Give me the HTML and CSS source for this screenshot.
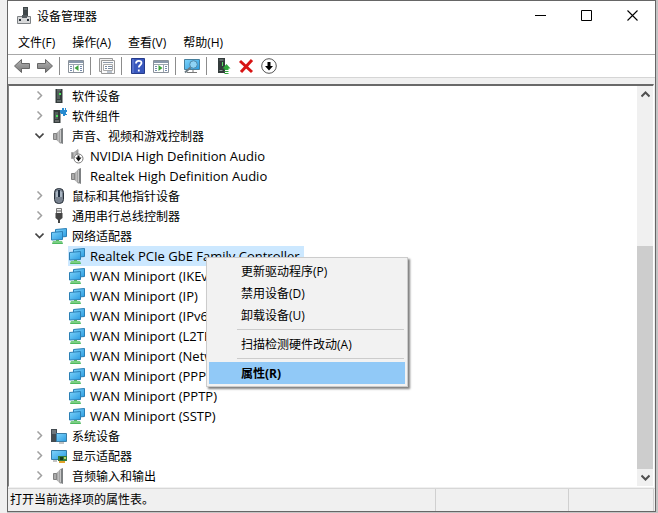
FILE: index.html
```html
<!DOCTYPE html>
<html lang="zh-CN">
  <head>
    <meta charset="utf-8" />
    <meta name="viewport" content="width=device-width, initial-scale=1" />
    <title>设备管理器</title>
    <link rel="stylesheet" href="styles.css">
  </head>
  <body>
    <!-- Shared icons -->
    <svg class="icon-defs" aria-hidden="true">
      <defs>
        <linearGradient id="screen" x1="0" y1="0" x2="1" y2="1">
          <stop offset="0" stop-color="#7fd4fb" />
          <stop offset="1" stop-color="#2a9be0" />
        </linearGradient>
        <linearGradient id="metal" x1="0" y1="0" x2="1" y2="0">
          <stop offset="0" stop-color="#777" />
          <stop offset="0.5" stop-color="#c4c4c4" />
          <stop offset="1" stop-color="#888" />
        </linearGradient>
        <linearGradient id="arrow" x1="0" y1="0" x2="0" y2="1">
          <stop offset="0" stop-color="#b5b5b5" />
          <stop offset="1" stop-color="#777" />
        </linearGradient>
      </defs>
      <symbol id="i-right" viewBox="0 0 9 9"><path d="M2.5 0.5l4 4-4 4" fill="none" stroke="#a0a0a0" stroke-width="1.5" /></symbol>
      <symbol id="i-down" viewBox="0 0 9 9"><path d="M0.5 2.5l4 4 4-4" fill="none" stroke="#444" stroke-width="1.6" /></symbol>
      <symbol id="i-network" viewBox="0 0 16 16">
        <path d="M4.500 1.500l11-1v8l-11 1z" fill="url(#screen)" stroke="#2b7fb5" />
        <path d="M.5 4.500l11-1v8l-11 .5z" fill="url(#screen)" stroke="#2b7fb5" />
        <path d="M5 12h3v1h3l1 3H1l1-3h3z" fill="#4fb860" />
        <path d="M2 14h9" stroke="#a6e5a4" />
      </symbol>
      <symbol id="i-speaker" viewBox="0 0 16 16">
        <path d="M2.500 5.500h3v6h-3z" fill="#aaa" stroke="#808080" />
        <path d="M5 5.500l4.500-4.500v15L5 11.500z" fill="url(#metal)" />
        <path d="M9.500 1l2.500-1v16l-2.500-1z" fill="#7d8082" />
        <path d="M9.500 2v12" stroke="#c9c9c9" />
      </symbol>
      <symbol id="i-speaker-off" viewBox="0 0 16 16">
        <path d="M2.500 4.500h2v6h-2zM5 4.500l4-3v11l-4-3" fill="url(#metal)" stroke="#aaa" />
        <circle cx="9.500" cy="10.500" r="4.500" fill="#fff" stroke="#777" />
        <path d="M8.500 7.500h2v2h2l-3 4-3-4h2z" fill="#111" />
      </symbol>
      <symbol id="i-device" viewBox="0 0 16 16">
        <path d="M4.500 1h7v14h-7z" fill="#333b3b" />
        <path d="M6 3h3v8H6z" fill="#53605c" />
        <path d="M6 2h4M6 13h4" stroke="#8b9794" />
        <path d="M8 5h2v2H8z" fill="#4be35c" />
      </symbol>
      <symbol id="i-component" viewBox="0 0 16 16">
        <path d="M2.500 2h7v13h-7z" fill="#333b3b" />
        <path d="M4 4h3v7H4z" fill="#53605c" /><path d="M4 13h4" stroke="#999" />
        <path d="M5 7h2v2H5z" fill="#4be35c" />
        <path d="M9 2h2V0h2v2h1V0h1v2h1v2h-1v2h1v1h-2v1h-2V6h-2V5H9z" fill="#288bd0" />
      </symbol>
      <symbol id="i-mouse" viewBox="0 0 16 16">
        <rect x="3.500" y=".5" width="9" height="15" rx="4" fill="#78828f" stroke="#29313a" />
        <path d="M5 4q3-3 6 0v5H5z" fill="#a9b5c2" />
        <path d="M8 2v7" stroke="#202e40" stroke-width="2" />
      </symbol>
      <symbol id="i-usb" viewBox="0 0 16 16">
        <path d="M5.500.5h5v5h-5z" fill="#eee" stroke="#777" />
        <path d="M7 2v2M9 2v2" stroke="#555" />
        <path d="M4.500 5h7v5L9 12v3H7v-3l-2.500-2z" fill="#444" />
      </symbol>
      <symbol id="i-system" viewBox="0 0 16 16">
        <path d="M0 1h6v13H0z" fill="#444c51" /><path d="M1 3h4M1 5h4" stroke="#99a4ab" />
        <path d="M5.500 5.500h10v8h-10z" fill="url(#screen)" stroke="#3b7da5" />
        <path d="M8 15h5" stroke="#888" />
      </symbol>
      <symbol id="i-display" viewBox="0 0 16 16">
        <path d="M.5 2.500h15v9H.5z" fill="url(#screen)" stroke="#347da8" />
        <path d="M7 8h9v5H7z" fill="#327b3d" /><path d="M9 9h3v3H9z" fill="#193a20" />
        <path d="M13 9h2v2h-2z" fill="#b8d36b" /><path d="M8 14h6" stroke="#e3a42b" stroke-width="2" />
        <path d="M2 13h4" stroke="#888" />
      </symbol>
      <symbol id="i-manager" viewBox="0 0 16 18">
        <path d="M7 0h5v11H7z" fill="#3f4648" /><path d="M8 2h3" stroke="#8b9497" />
        <path d="M1.500 9.500h13v7h-13z" fill="#d8d9da" stroke="#7e8285" />
        <path d="M6 8h5v3H6z" fill="#555c60" />
        <path d="M3 12h2v2H3zM11 12h2v2h-2z" fill="#29323a" />
      </symbol>
    </svg>

    <div class="window">
      <header class="titlebar">
        <svg class="app-icon"><use href="#i-manager" /></svg>
        <h1>设备管理器</h1>
        <button class="win-btn" aria-label="最小化"><svg width="11" height="11"><path d="M0 5.500h11" stroke="#000" /></svg></button>
        <button class="win-btn" aria-label="最大化"><svg width="11" height="11"><path d="M.5.5h10v10H.5z" fill="none" stroke="#000" /></svg></button>
        <button class="win-btn" aria-label="关闭"><svg width="11" height="11"><path d="M.5.5l10 10M10.500.5l-10 10" stroke="#000" stroke-width="1.100" /></svg></button>
      </header>

      <nav class="menubar">
        <button>文件(F)</button>
        <button>操作(A)</button>
        <button>查看(V)</button>
        <button>帮助(H)</button>
      </nav>

      <div class="toolbar">
        <button aria-label="后退"><svg viewBox="0 0 16 16"><path d="M.5 8L7.500 1.500v4h8v5h-8v4z" fill="url(#arrow)" stroke="#666" /></svg></button>
        <button aria-label="前进"><svg viewBox="0 0 16 16"><path d="M15.500 8L8.500 1.500v4h-8v5h8v4z" fill="url(#arrow)" stroke="#666" /></svg></button>
        <span class="sep"></span>
        <button aria-label="显示控制台树">
          <svg viewBox="0 0 16 16">
            <path d="M.5 2.500h15v12H.5z" fill="#fff" stroke="#8a929b" /><path d="M1 4h14" stroke="#8998ab" stroke-width="2" />
            <path d="M1 6.500h14M5.500 7v7" stroke="#9ba5b0" /><path d="M2 8.500h2M2 10.500h2M2 12.500h2M12 8.500h2M12 10.500h2M12 12.500h2" stroke="#758bad" />
            <path d="M10.500 7v6l-4-3z" fill="#3da33b" />
          </svg>
        </button>
        <span class="sep"></span>
        <button aria-label="属性">
          <svg viewBox="0 0 16 16">
            <path d="M.5.5h13v13H.5z" fill="#f1f1f1" stroke="#999" /><path d="M2.500 2.500h13v13h-13z" fill="#fafafa" stroke="#999" />
            <path d="M4 4.500h10" stroke="#8e9aaa" /><path d="M4.500 6.500h9v6h-9z" fill="#fff" stroke="#aaa" />
            <path d="M6 8.500h2M9 8.500h4M6 10.500h2M9 10.500h4M8 14h5" stroke="#788aa0" />
          </svg>
        </button>
        <span class="sep"></span>
        <button aria-label="帮助">
          <svg viewBox="0 0 16 16">
            <path d="M1.500.5h13v15h-13z" fill="#3857bd" stroke="#253b8a" /><path d="M3 1v14" stroke="#7089da" />
            <path d="M6 5.500c0-3.500 5.500-3.500 5.500-.5 0 2-2.700 2-2.700 4.500M8.800 11.500v2" fill="none" stroke="#fff" stroke-width="1.800" />
          </svg>
        </button>
        <button aria-label="显示操作窗格">
          <svg viewBox="0 0 16 16">
            <path d="M.5 2.500h15v12H.5z" fill="#fff" stroke="#8a929b" /><path d="M1 4h14" stroke="#8998ab" stroke-width="2" />
            <path d="M1 6.500h14M10.500 7v7" stroke="#9ba5b0" /><path d="M12 8.500h2M12 10.500h2M12 12.500h2M2 8.500h2M2 10.500h2M2 12.500h2" stroke="#758bad" />
            <path d="M5.500 7v6l4-3z" fill="#3da33b" />
          </svg>
        </button>
        <span class="sep"></span>
        <button aria-label="扫描检测硬件改动">
          <svg viewBox="0 0 16 16">
            <path d="M.5 1.500h15v10H.5z" fill="url(#screen)" stroke="#477f9c" /><path d="M3 14.500h10M9 12v2" stroke="#777" />
            <circle cx="9.500" cy="6.500" r="3.800" fill="#8fd3f5" stroke="#4f88a8" /><path d="M6.500 9.500L1 14.500" stroke="#6c7a82" stroke-width="2" />
          </svg>
        </button>
        <span class="sep"></span>
        <button aria-label="更新驱动程序">
          <svg viewBox="0 0 16 16">
            <path d="M3 0h7v15H3z" fill="#333b3b" /><path d="M4.500 2h4M4.500 12.500h3" stroke="#909c99" /><path d="M7 4h1v4H7z" fill="#5edb68" />
            <path d="M11.500 6l4 4.500h-2V12h-4v-1.500h-2zM9.500 13h4v1h-4zM9.500 15h4v1h-4z" fill="#31a83c" />
          </svg>
        </button>
        <button aria-label="卸载设备"><svg viewBox="0 0 16 16"><path d="M2 3l12 11M14 2L3 14" fill="none" stroke="#d71414" stroke-width="3" /></svg></button>
        <button aria-label="禁用设备">
          <svg viewBox="0 0 16 16">
            <circle cx="8" cy="8" r="7.300" fill="#fff" stroke="#555" /><path d="M6.500 4h3v4h2.500l-4 4.500L4 8h2.500z" fill="#000" />
          </svg>
        </button>
      </div>

      <main class="content">
        <div class="tree-pane">
          <ul class="tree">
            <li><button class="node"><svg class="chev"><use href="#i-right" /></svg><svg class="icon"><use href="#i-device" /></svg><span>软件设备</span></button></li>
            <li><button class="node"><svg class="chev"><use href="#i-right" /></svg><svg class="icon"><use href="#i-component" /></svg><span>软件组件</span></button></li>
            <li>
              <button class="node"><svg class="chev"><use href="#i-down" /></svg><svg class="icon"><use href="#i-speaker" /></svg><span>声音、视频和游戏控制器</span></button>
              <ul class="children">
                <li><button class="node"><svg class="icon"><use href="#i-speaker-off" /></svg><span>NVIDIA High Definition Audio</span></button></li>
                <li><button class="node"><svg class="icon"><use href="#i-speaker" /></svg><span>Realtek High Definition Audio</span></button></li>
              </ul>
            </li>
            <li><button class="node"><svg class="chev"><use href="#i-right" /></svg><svg class="icon"><use href="#i-mouse" /></svg><span>鼠标和其他指针设备</span></button></li>
            <li><button class="node"><svg class="chev"><use href="#i-right" /></svg><svg class="icon"><use href="#i-usb" /></svg><span>通用串行总线控制器</span></button></li>
            <li>
              <button class="node"><svg class="chev"><use href="#i-down" /></svg><svg class="icon"><use href="#i-network" /></svg><span>网络适配器</span></button>
              <ul class="children">
                <li><button class="node selected"><svg class="icon"><use href="#i-network" /></svg><span>Realtek PCIe GbE Family Controller</span></button></li>
                <li><button class="node"><svg class="icon"><use href="#i-network" /></svg><span>WAN Miniport (IKEv2)</span></button></li>
                <li><button class="node"><svg class="icon"><use href="#i-network" /></svg><span>WAN Miniport (IP)</span></button></li>
                <li><button class="node"><svg class="icon"><use href="#i-network" /></svg><span>WAN Miniport (IPv6)</span></button></li>
                <li><button class="node"><svg class="icon"><use href="#i-network" /></svg><span>WAN Miniport (L2TP)</span></button></li>
                <li><button class="node"><svg class="icon"><use href="#i-network" /></svg><span>WAN Miniport (Network)</span></button></li>
                <li><button class="node"><svg class="icon"><use href="#i-network" /></svg><span>WAN Miniport (PPPOE)</span></button></li>
                <li><button class="node"><svg class="icon"><use href="#i-network" /></svg><span>WAN Miniport (PPTP)</span></button></li>
                <li><button class="node"><svg class="icon"><use href="#i-network" /></svg><span>WAN Miniport (SSTP)</span></button></li>
              </ul>
            </li>
            <li><button class="node"><svg class="chev"><use href="#i-right" /></svg><svg class="icon"><use href="#i-system" /></svg><span>系统设备</span></button></li>
            <li><button class="node"><svg class="chev"><use href="#i-right" /></svg><svg class="icon"><use href="#i-display" /></svg><span>显示适配器</span></button></li>
            <li><button class="node"><svg class="chev"><use href="#i-right" /></svg><svg class="icon"><use href="#i-speaker" /></svg><span>音频输入和输出</span></button></li>
          </ul>

          <div class="scrollbar">
            <button aria-label="向上滚动"><svg width="9" height="7"><path d="M.5 5.500l4-4 4 4" fill="none" stroke="#505050" stroke-width="2" /></svg></button>
            <div class="track"><div class="thumb"></div></div>
            <button aria-label="向下滚动"><svg width="9" height="7"><path d="M.5 1.500l4 4 4-4" fill="none" stroke="#505050" stroke-width="2" /></svg></button>
          </div>

          <div class="context-menu">
            <button>更新驱动程序(P)</button>
            <button>禁用设备(D)</button>
            <button>卸载设备(U)</button>
            <hr />
            <button>扫描检测硬件改动(A)</button>
            <hr />
            <button class="active">属性(R)</button>
          </div>
        </div>
      </main>

      <footer class="statusbar">
        <span class="message">打开当前选择项的属性表。</span>
        <span class="cell cell-wide"></span>
        <span class="cell"></span>
      </footer>
    </div>
  </body>
</html>
```
FILE: styles.css
```css
*{
  box-sizing: border-box;
}

body{
  margin: 0;
  min-height: 100vh;
  padding: 0 2px 2px 7px;
  display: flex;
  background: linear-gradient(to right, #f0f0f0 7px, #c4c4c4 7px);
  font-family: "Open Sans", "Noto Sans CJK SC", sans-serif;
  font-size: 12px;
  color: #000;
}

button{
  margin: 0;
  padding: 0;
  border: 0;
  background: none;
  font: inherit;
  color: inherit;
}

svg{
  display: block;
  flex: none;
}

.icon-defs{
  position: absolute;
  width: 0;
  height: 0;
}

.window{
  flex: 1;
  min-width: 0;
  display: flex;
  flex-direction: column;
  border: 1px solid #666;
  background-color: #fff;
}

/* title and menus */
.titlebar{
  display: flex;
  align-items: center;
  height: 29px;
  padding-left: 8px;
}

.titlebar h1{
  flex: 1;
  margin: 0;
  padding-left: 5px;
  font-size: 12px;
  font-weight: normal;
}

.app-icon{
  width: 16px;
  height: 18px;
}

.win-btn{
  width: 46px;
  height: 29px;
  display: flex;
  align-items: center;
  justify-content: center;
}

.menubar{
  display: flex;
  gap: 17px;
  height: 25px;
  padding-left: 10px;
  border-bottom: 1px solid #a8a8a8;
}

.toolbar{
  display: flex;
  align-items: center;
  height: 23px;
  padding-left: 2px;
  border-bottom: 1px solid #d5d5d5;
}

.toolbar button{
  width: 23px;
  height: 22px;
  display: flex;
  align-items: center;
  justify-content: center;
}

.toolbar svg{
  width: 16px;
  height: 16px;
}

.sep{
  width: 1px;
  height: 18px;
  margin: 0 4px 0 3px;
  background-color: #8c8c8c;
}

/* device tree */
.content{
  flex: 1;
  display: flex;
  padding: 6px 1px 1px 0;
  background-color: #f0f0f0;
}

.tree-pane{
  position: relative;
  flex: 1;
  display: flex;
  border: 1px solid #828282;
  border-top: 2px solid #696969;
  border-right-color: #fff;
  border-bottom-color: #fff;
  background-color: #fff;
}

.tree{
  flex: 1;
  padding-left: 25px;
}

.tree,
.children{
  margin: 0;
  list-style: none;
}

.children{
  padding-left: 34px;
  font-size: 13px;
}

.node{
  display: flex;
  align-items: center;
  height: 20px;
  padding: 0 4px 1px 1px;
  white-space: nowrap;
}

.node.selected{
  background-color: #cce8ff;
}

.chev{
  width: 9px;
  height: 9px;
  margin-right: 7px;
}

.icon{
  width: 16px;
  height: 16px;
  margin-right: 5px;
}

.scrollbar{
  width: 16px;
  display: flex;
  flex-direction: column;
  background-color: #f0f0f0;
}

.scrollbar button{
  height: 17px;
  display: flex;
  align-items: center;
  justify-content: center;
}

.track{
  flex: 1;
  display: flex;
  align-items: flex-end;
}

.thumb{
  width: 100%;
  height: 61%;
  background-color: #cdcdcd;
}

.context-menu{
  position: absolute;
  left: 197px;
  top: 171px;
  width: 202px;
  padding: 2px;
  border: 1px solid #ccc;
  background-color: #f2f2f2;
  box-shadow: 2px 2px 2px rgba(0, 0, 0, 0.5);
}

.context-menu button{
  display: block;
  width: 100%;
  height: 22px;
  padding: 0 0 1px 32px;
  text-align: left;
}

.context-menu .active{
  background-color: #91c9f7;
  font-weight: bold;
}

.context-menu hr{
  height: 1px;
  margin: 3px 1px 3px 28px;
  border: 0;
  background-color: #ccc;
}

.statusbar{
  display: flex;
  height: 23px;
  padding-right: 1px;
  border-top: 1px solid #d7d7d7;
  background-color: #f0f0f0;
  line-height: 21px;
}

.message{
  flex: 1;
  padding-left: 2px;
  border-right: 1px solid #d0d0d0;
}

.cell{
  width: 85px;
  border-right: 1px solid #d0d0d0;
}

.cell-wide{
  width: 133px;
}
```
